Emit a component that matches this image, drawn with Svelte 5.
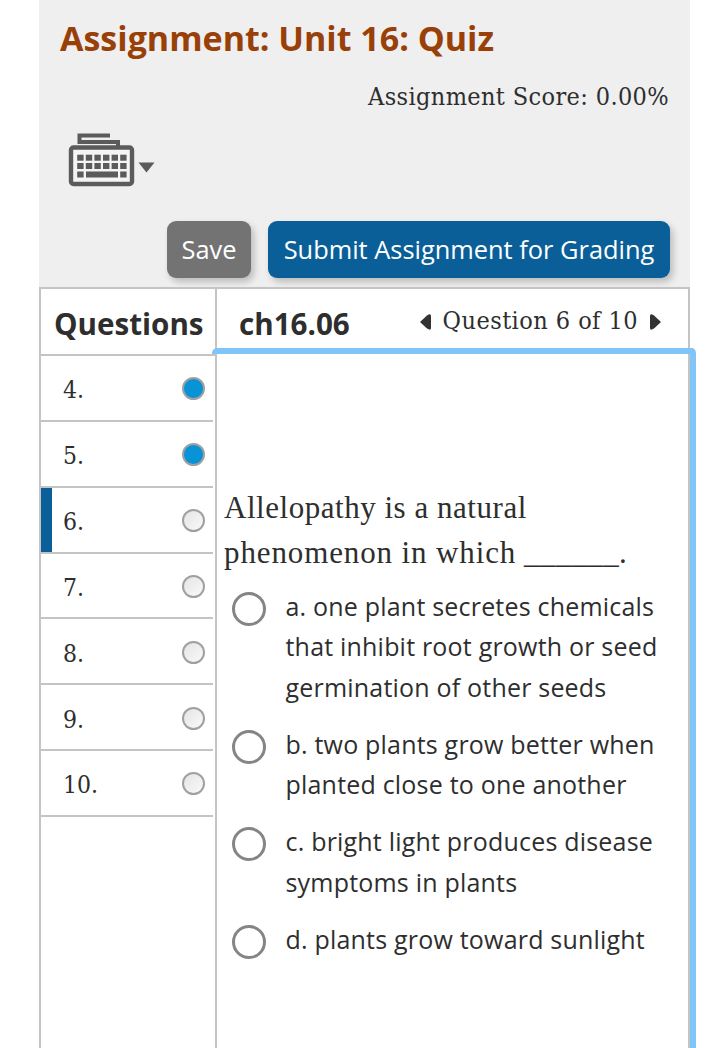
<script>
    const questions = [
        { number: 4, answered: true },
        { number: 5, answered: true },
        { number: 6, answered: false },
        { number: 7, answered: false },
        { number: 8, answered: false },
        { number: 9, answered: false },
        { number: 10, answered: false }
    ]

    const choices = [
        ['a. one plant secretes chemicals', 'that inhibit root growth or seed', 'germination of other seeds'],
        ['b. two plants grow better when', 'planted close to one another'],
        ['c. bright light produces disease', 'symptoms in plants'],
        ['d. plants grow toward sunlight']
    ]

    const keys = [0, 1, 2, 3, 4, 5]

    let current = $state(6)
    let selected = $state(null)
</script>

<div class="page">
    <header>
        <h1>Assignment: Unit 16: Quiz</h1>
        <div class="score">Assignment Score: 0.00%</div>
        <div class="tools">
            <svg width="90" height="56" viewBox="0 0 90 56">
                <path d="M43 3.500H12.500V10H51V15" fill="none" stroke="#5b5b5b" stroke-width="4" />
                <rect x="4" y="15.500" width="61" height="36.500" rx="2.500" fill="#f4f4f4" stroke="#5b5b5b" stroke-width="4.400" />
                {#each keys as key}
                    <rect x={10.2 + key * 8.6} y="22.700" width="6.400" height="6" fill="#5b5b5b" />
                    <rect x={10.2 + key * 8.6} y="31" width="6.400" height="6" fill="#5b5b5b" />
                {/each}
                <rect x="10.200" y="39.500" width="6.400" height="6" fill="#5b5b5b" />
                <rect x="19" y="39.500" width="32" height="6" fill="#5b5b5b" />
                <rect x="53.200" y="39.500" width="6.400" height="6" fill="#5b5b5b" />
                <path d="M71.500 30.500H87.500L79.500 40.500Z" fill="#5b5b5b" />
            </svg>
        </div>
        <div class="actions">
            <button class="save">Save</button>
            <button class="submit">Submit Assignment for Grading</button>
        </div>
    </header>

    <div class="quiz">
        <nav>
            <h2>Questions</h2>
            {#each questions as question}
                <button
                    class="question"
                    class:current={question.number == current}
                    onclick={() => current = question.number}
                >
                    <span>{question.number}.</span>
                    <i class:answered={question.answered}></i>
                </button>
            {/each}
        </nav>

        <main>
            <div class="bar">
                <h2>ch16.06</h2>
                <div class="pager">
                    <svg width="11" height="16" viewBox="0 0 11 16"><path d="M0 8L7 1.500Q11 -1 11 2V14Q11 17 7 14.500Z" fill="#333" /></svg>
                    <span>Question 6 of 10</span>
                    <svg width="11" height="16" viewBox="0 0 11 16"><path d="M11 8L4 1.500Q0 -1 0 2V14Q0 17 4 14.500Z" fill="#333" /></svg>
                </div>
            </div>
            <div class="body">
                <p><span class="line1">Allelopathy is a natural</span><br /><span class="line2">phenomenon in which</span> <span class="blank">______</span>.</p>
                {#each choices as choice, i}
                    <label>
                        <input type="radio" name="answer" value={i} bind:group={selected} />
                        <span class="choice">
                            {#each choice as line}
                                <span class="line">{line}</span>
                            {/each}
                        </span>
                    </label>
                {/each}
            </div>
            <div class="focus"></div>
        </main>
    </div>
</div>

<style>
    :global(body) {
        background: #fff;
    }

    .page {
        box-sizing: border-box;
        width: 707px;
        height: 1048px;
        padding: 0 17px 0 39px;
        overflow: hidden;
        color: #2e2e2e;
        font-family: "Open Sans", sans-serif;
        white-space: nowrap;
    }

    header {
        display: flex;
        flex-direction: column;
        box-sizing: border-box;
        height: 287px;
        padding: 13px 20px 0 21px;
        background: #efefef;
    }

    h1, h2, p {
        margin: 0;
    }

    h1 {
        height: 50px;
        color: #984008;
        font-size: 34px;
        line-height: 50px;
    }

    .score {
        align-self: flex-end;
        margin: 16px 1px 0 0;
        font: 25px/36px "DejaVu Serif Condensed", "DejaVu Serif", serif;
        letter-spacing: 0.370px;
    }

    .tools {
        height: 56px;
        margin: 17px 0 0 7px;
    }

    .actions {
        display: flex;
        justify-content: flex-end;
        gap: 17px;
        margin-top: 33px;
    }

    .actions button {
        height: 57px;
        padding: 0 0 2px;
        border: none;
        border-radius: 9px;
        color: #fff;
        font: 25.400px "Open Sans", sans-serif;
        box-shadow: 3px 4px 7px rgba(0, 0, 0, 0.22);
    }

    .actions .save {
        width: 84px;
        background: #737373;
    }

    .actions .submit {
        width: 402px;
        background: #0a5f99;
    }

    .quiz {
        display: grid;
        grid-template-columns: 176px 475px;
        width: 651px;
        height: 761px;
        box-sizing: border-box;
    }

    nav {
        box-sizing: border-box;
        padding-right: 2px;
        border-top: 2px solid #c4c4c4;
        border-left: 2px solid #c4c4c4;
    }

    nav h2 {
        box-sizing: border-box;
        height: 67px;
        padding: 15px 0 0 13px;
        margin-right: -2px;
        border-bottom: 2px solid #c4c4c4;
    }

    h2 {
        font-size: 29.600px;
        line-height: 40px;
    }

    .question {
        display: flex;
        align-items: center;
        justify-content: space-between;
        box-sizing: border-box;
        width: 100%;
        height: 65.850px;
        padding: 2px 8px 0 22px;
        border: none;
        border-bottom: 2px solid #c4c4c4;
        background: #fff;
        color: inherit;
        font: 24.500px "DejaVu Serif Condensed", "DejaVu Serif", serif;
    }

    .question span {
        padding-top: 2px;
    }

    .question.current {
        background: linear-gradient(to right, #0a5f99 11px, #fff 11px);
    }

    .question i {
        box-sizing: border-box;
        width: 23px;
        height: 23px;
        border: 2px solid #a0a0a0;
        border-radius: 50%;
        background: linear-gradient(135deg, #e4e4e4, #fafafa);
    }

    .question i.answered {
        background: #0793d6;
    }

    main {
        position: relative;
        box-sizing: border-box;
        border: 2px solid #c4c4c4;
        border-bottom: none;
    }

    .bar {
        display: flex;
        justify-content: space-between;
        box-sizing: border-box;
        height: 66px;
        padding: 15px 27px 0 22px;
    }

    .pager {
        display: flex;
        align-items: center;
        gap: 12px;
        height: 36px;
        font: 25px "DejaVu Serif Condensed", "DejaVu Serif", serif;
        letter-spacing: 0.450px;
    }

    .pager span {
        padding-bottom: 3px;
    }

    .body {
        padding: 130px 0 0 7px;
    }

    p {
        margin-bottom: 12px;
        font: 31px/45px "Liberation Serif", serif;
    }

    .line1 {
        letter-spacing: 0.530px;
    }

    .line2 {
        letter-spacing: 0.880px;
    }

    .blank {
        letter-spacing: 0.330px;
    }

    label {
        display: flex;
        gap: 19.500px;
        margin: 0 0 17px 8px;
        font-size: 25px;
        line-height: 40.300px;
        letter-spacing: 0.200px;
    }

    .choice {
        margin-top: -1px;
        margin-bottom: 1px;
    }

    .line {
        display: block;
    }

    input {
        flex: none;
        box-sizing: border-box;
        width: 34px;
        height: 34px;
        margin: 5px 0 0;
        border: 3px solid #858585;
        border-radius: 50%;
        background: #fff;
        appearance: none;
    }

    input:checked {
        background: #0793d6;
    }

    .focus {
        position: absolute;
        top: 59px;
        right: -8px;
        bottom: 0;
        left: -5px;
        border-top: 6px solid #80c5f8;
        border-right: 6px solid #80c5f8;
        border-radius: 5px 5px 0 0;
        pointer-events: none;
    }
</style>
